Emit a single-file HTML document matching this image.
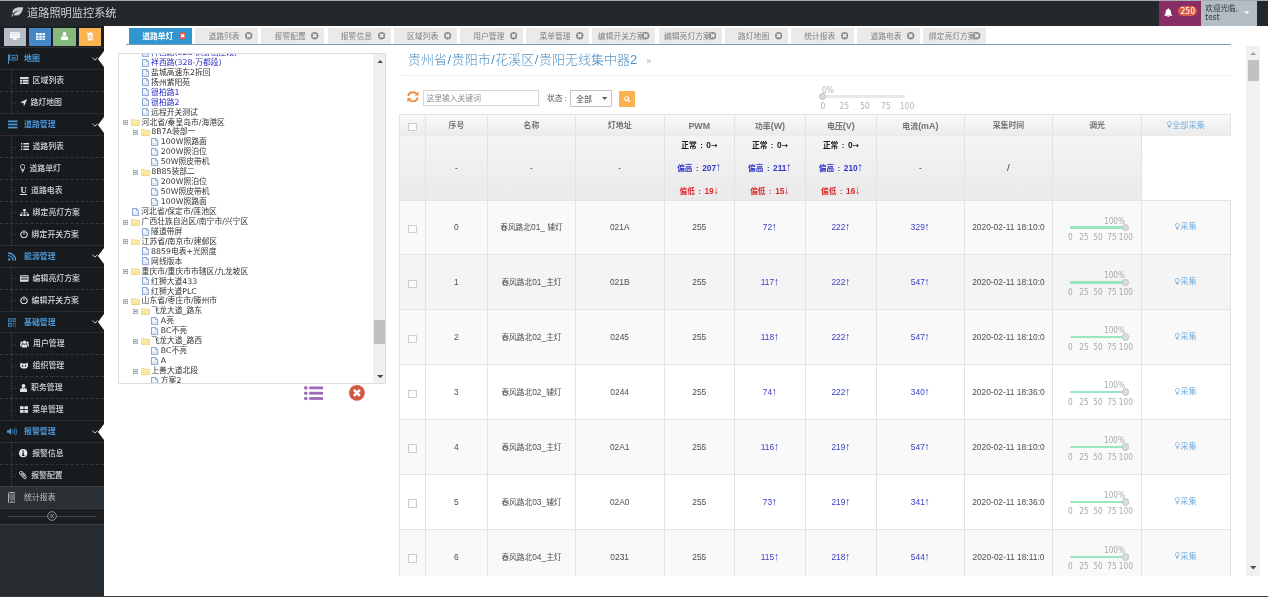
<!DOCTYPE html><html lang="zh-CN"><head><meta charset="utf-8"><title>道路照明监控系统</title><style>
*{box-sizing:border-box;margin:0;padding:0}
html,body{width:1268px;height:597px;overflow:hidden;background:#fff}
body{position:relative;will-change:transform;font-family:"Liberation Sans","Noto Sans CJK SC",sans-serif;font-size:8px;color:#393939}
.abs{position:absolute}
#topline{left:0;top:0;width:1268px;height:1px;background:#a9abad}
#header{left:0;top:1px;width:1268px;height:25px;background:#22282c}
#brand{left:27px;top:3.5px;font-size:11.2px;line-height:16px;color:#cfd3d6;white-space:nowrap;letter-spacing:0}
#bell{left:1159px;top:0;width:41.5px;height:25px;background:#892e65}
#user{left:1200.5px;top:0;width:56.5px;height:25px;background:#b4bcc4}
#user .t{left:4.8px;top:4.4px;font-size:7.6px;line-height:8px;color:#2d3338;white-space:nowrap}
#user .t span{font-family:"DejaVu Sans Condensed","Liberation Sans",sans-serif;font-size:8.3px}
#badge{left:19.2px;top:4.8px;width:19.2px;height:10.2px;border-radius:5px;background:#dd5a43;color:#fff;font-size:8.4px;line-height:10.4px;text-align:center;font-family:"DejaVu Sans Condensed","Liberation Sans",sans-serif}
#sidebar{left:0;top:26px;width:104px;height:570px;background:#252b2e}
#shortcuts{left:0;top:0;width:104px;height:22px;background:#1c2024;border-bottom:1px solid #2b3035}
.sc{top:1.7px;height:18.4px;width:22.3px}
.row{left:0;width:104px;height:21.93px;background:#181b1e;border-top:1px solid #2a2e32}
.row .t{position:absolute;top:0;line-height:22.4px;font-size:7.9px;white-space:nowrap;font-weight:500}
.row.p .t{left:24px;color:#4b97d8;font-weight:700}
.row.s .t{color:#d3d7db}
.row.s{border-top:1px dashed #35393d}
.row.s.first{border-top:1px solid #2a2e32}
.row.s:before{content:"";position:absolute;left:10.5px;top:-1px;bottom:0;border-left:1px dotted #3e4246}
.row.s:after{content:"";position:absolute;left:12px;top:10.5px;width:3px;border-top:1px dotted #3e4246}
.row svg{position:absolute}
.tri{position:absolute;right:0;top:2.5px;width:0;height:0;border-top:8px solid transparent;border-bottom:8px solid transparent;border-right:6.5px solid #fff}
#tabline{left:126px;top:44px;width:1104.5px;height:1.2px;background:#7c9cb4}
.tab{top:28.4px;height:15.8px;width:63px;background:#eceae8;color:#828282;font-size:7.8px;line-height:18.2px;white-space:nowrap;overflow:hidden}
.tab .l{position:absolute;left:0;width:57.6px;text-align:center;top:0}
.tab.on{background:#2f96cf;color:#fff;font-weight:700}
.tab .x{position:absolute;left:50px;top:4.1px;width:7.4px;height:7.4px}
#tree{left:118.3px;top:53.4px;width:268px;height:330.8px;border:1px solid #dcdcdc;background:#fff;overflow:hidden}
.ti{position:absolute;height:10px;line-height:10px;font-size:7.8px;white-space:nowrap;color:#333;font-family:"DejaVu Sans","Liberation Sans","Noto Sans CJK SC",sans-serif}
.ti.b{color:#2a2ec4}
.tico{position:absolute}
#tsb{left:254px;top:0;width:13px;height:329px;background:#f0f0f0}
#tsb .th{position:absolute;left:1.2px;top:265.5px;width:11.5px;height:24.3px;background:#c1c1c1}
#msb{left:1246px;top:45.6px;width:14px;height:530.4px;background:#f1f1f1}
#msb .th{position:absolute;left:1.5px;top:14.2px;width:11.5px;height:20.8px;background:#c1c1c1}
#h1{left:408px;top:50.5px;font-size:13px;line-height:18px;color:#4f8fc4;white-space:nowrap;font-weight:300}
#h1 i{font-style:normal;margin:0 .5px}
#h1 small{font-size:9px;color:#8aa6c0;margin-left:9px}
#dot{left:400px;top:75px;width:832px;border-top:1px dotted #e6eaef}
#kw{left:423px;top:90px;width:116px;height:15.8px;border:1px solid #d6d6d6;background:#fff;font-size:7.8px;line-height:15px;color:#8c8c8c;padding-left:2.4px;white-space:nowrap}
#stl{left:547px;top:92.5px;font-size:7.8px;line-height:12px;color:#555;white-space:nowrap}
#sel{left:570.4px;top:90.3px;width:41.5px;height:16.3px;border:1px solid #c4c4c4;border-radius:1px;background:#fdfdfd;font-size:8px;line-height:17px;padding-left:4.5px;color:#484848}
#sbtn{left:619px;top:90.6px;width:15.8px;height:16.3px;background:#fcb150}
table{border-collapse:collapse}
#tbl{left:399.4px;top:113.5px;width:831.3px}
.c{position:absolute;text-align:center;white-space:nowrap;font-size:8.4px;line-height:10px;color:#4e4e4e;font-family:"Liberation Sans","Noto Sans CJK SC",sans-serif}
.dg{font-size:8.3px}
.c b{word-spacing:1.4px}
.ar{font-family:"DejaVu Sans",sans-serif;font-size:7.6px}
.au{font-family:"Liberation Sans",sans-serif;font-size:11.5px;line-height:0;margin-left:-.4px}
.ad{font-family:"Liberation Sans",sans-serif;font-size:11px;line-height:0;margin-left:-.5px}
.hd{color:#747474;font-size:7.9px;font-weight:700}
.vl{position:absolute;width:1px;background:#e2e2e2}
.hl{position:absolute;height:1px;background:#e4e4e4}
.cb{position:absolute;width:8.6px;height:8.6px;border:1px solid #cdcdcd;background:#fcfcfc}
.bl{color:#3a3fc0}
.sl .tr{position:absolute;height:2.4px;background:#9ae6c1;border-radius:1px}
.sl .hn{position:absolute;width:7.6px;height:7.6px;border-radius:50%;background:#dcdcdc;border:1px solid #c2c2c2}
.sl .lb{position:absolute;font-size:8.2px;line-height:10px;color:#a9a9a9;white-space:nowrap;transform:translateX(-50%);font-family:"DejaVu Sans Condensed","Liberation Sans",sans-serif}
.lk{color:#78afde;font-size:8.2px}
</style></head><body>
<div id="topline" class="abs"></div>
<div id="header" class="abs">
<svg class="abs" style="left:11.4px;top:6px" width="12.6" height="10" viewBox="0 0 12.6 10"><path d="M12.3 0.6C9.4 -0.1 4.6 0.2 2.6 2.4C1.2 3.9 1.3 5.6 1.9 6.8C3.8 4.6 6 3.5 8.8 3C6.2 4 4 5.6 2.2 7.9C1.7 8.6 1.3 9.2 0.8 9.8L0.1 9.3C0.6 8.5 1.1 7.8 1.6 7.2C3.2 8.9 6.6 9 8.8 7.4C11.3 5.6 11.4 2.6 12.3 0.6Z" fill="#c9cdd0"/></svg>
<div id="brand" class="abs">道路照明监控系统</div>
<div id="bell" class="abs"><svg class="abs" style="left:5.4px;top:6.6px" width="8.6" height="9.6" viewBox="0 0 9 10"><path d="M4.5 0.3C4.9 0.3 5.1 0.6 5.1 0.9C6.6 1.3 7.3 2.6 7.3 4.2C7.3 5.9 7.8 6.9 8.7 7.6V8.1H0.3V7.6C1.2 6.9 1.7 5.9 1.7 4.2C1.7 2.6 2.4 1.3 3.9 0.9C3.9 0.6 4.1 0.3 4.5 0.3ZM3.4 8.6H5.6C5.6 9.3 5.1 9.7 4.5 9.7C3.9 9.7 3.4 9.3 3.4 8.6Z" fill="#fff"/></svg><div id="badge" class="abs">250</div></div>
<div id="user" class="abs"><div class="t abs">欢迎光临,<br><span>test</span></div><svg class="abs" style="left:43.6px;top:10.4px" width="5.6" height="3.2" viewBox="0 0 7 4"><path d="M0.3 0.2H6.7L3.5 3.8Z" fill="#fff"/></svg></div>
</div>
<div id="sidebar" class="abs">
<div id="shortcuts" class="abs">
<div class="sc abs" style="left:4px;background:#b5bec7">
<svg class="abs" style="left:6.2px;top:4.8px" width="10" height="8" viewBox="0 0 10 8"><path d="M0.6 0.2H9.4C9.7 0.2 10 0.5 10 0.8V5.4C10 5.7 9.7 6 9.4 6H6.3L6.6 7H7.3V7.7H2.7V7H3.4L3.7 6H0.6C0.3 6 0 5.7 0 5.4V0.8C0 0.5 0.3 0.2 0.6 0.2ZM0.9 1.1V5.1H9.1V1.1Z" fill="#fff" fill-rule="evenodd"/><rect x="0.9" y="1.1" width="8.2" height="4" fill="#fff" opacity=".75"/></svg>
</div>
<div class="sc abs" style="left:28.5px;background:#4488c8">
<svg class="abs" style="left:7px;top:5px" width="9" height="7.4" viewBox="0 0 9 7.4" fill="#fff"><rect x="0" y="0" width="2.6" height="2"/><rect x="3.2" y="0" width="2.6" height="2"/><rect x="6.4" y="0" width="2.6" height="2"/><rect x="0" y="2.7" width="2.6" height="2"/><rect x="3.2" y="2.7" width="2.6" height="2"/><rect x="6.4" y="2.7" width="2.6" height="2"/><rect x="0" y="5.4" width="2.6" height="2"/><rect x="3.2" y="5.4" width="2.6" height="2"/><rect x="6.4" y="5.4" width="2.6" height="2"/></svg>
</div>
<div class="sc abs" style="left:53.3px;background:#87b87c">
<svg class="abs" style="left:7.8px;top:4.6px" width="7" height="8" viewBox="0 0 7 8" fill="#fff"><circle cx="3.5" cy="2" r="1.9"/><path d="M0 8V6.2C0 4.8 1.2 4 2.2 4C2.6 4.4 3 4.6 3.5 4.6C4 4.6 4.4 4.4 4.8 4C5.8 4 7 4.8 7 6.2V8Z"/></svg>
</div>
<div class="sc abs" style="left:78.6px;background:#fdb34f">
<svg class="abs" style="left:8px;top:4.4px" width="6.4" height="8.6" viewBox="0 0 6.4 8.6"><path d="M0 0.9H2.1V0.2H4.3V0.9H6.4V1.9H5.9L5.5 8C5.5 8.3 5.2 8.6 4.9 8.6H1.5C1.2 8.6 0.9 8.3 0.9 8L0.5 1.9H0Z" fill="#fff"/><path d="M2 3V7.2M3.2 3V7.2M4.4 3V7.2" stroke="#fdb34f" stroke-width=".55"/></svg>
</div>
</div>
<div class="row p abs" style="top:21.40px"><svg style="left:8px;top:5.5px" width="10" height="10" viewBox="0 0 10 10"><path d="M0.6 0.3V9.7" stroke="#4b97d8" stroke-width="1.1"/><path d="M1.6 1.2C3 0.4 4.2 1.8 5.6 1.6C7 1.4 8 0.8 9.4 1V5.8C8 5.6 7 6.2 5.6 6.4C4.2 6.6 3 5.2 1.6 6Z" fill="none" stroke="#4b97d8" stroke-width=".9"/><path d="M3.4 2.3L5.4 3.4L7.6 2.6V4.6L5.4 5.2L3.4 4.2Z" fill="#4b97d8" opacity=".8"/></svg><div class="t">地图</div><svg style="left:91.6px;top:8.6px" width="6" height="4" viewBox="0 0 6 4"><path d="M0.4 0.5L3 3.2L5.6 0.5" fill="none" stroke="#c8ccd0" stroke-width="1"/></svg><div class="tri"></div></div>
<div class="row s first abs" style="top:43.33px"><svg style="left:20.1px;top:6.6px" width="8.6" height="7.4" viewBox="0 0 8.6 7.4" fill="#dfe3e6"><rect x="0" y="0" width="8.6" height="1.9"/><rect x="0" y="2.7" width="2.4" height="1.9"/><rect x="3" y="2.7" width="5.6" height="1.9"/><rect x="0" y="5.4" width="2.4" height="1.9"/><rect x="3" y="5.4" width="5.6" height="1.9"/></svg><div class="t" style="left:32.6px">区域列表</div></div>
<div class="row s abs" style="top:65.26px"><svg style="left:20.2px;top:6.4px" width="7.4" height="7.6" viewBox="0 0 7.4 7.6"><path d="M7.3 0.1L3.9 7.5L3.5 4L0 3.5Z" fill="#dfe3e6"/></svg><div class="t" style="left:30.4px">路灯地图</div></div>
<div class="row p abs" style="top:87.19px"><svg style="left:8px;top:6px" width="9.5" height="9" viewBox="0 0 9.5 9" fill="#4b97d8"><rect x="0" y="0.5" width="9.5" height="1.7"/><rect x="0" y="3.6" width="9.5" height="1.7"/><rect x="0" y="6.7" width="9.5" height="1.7"/></svg><div class="t">道路管理</div><svg style="left:91.6px;top:8.6px" width="6" height="4" viewBox="0 0 6 4"><path d="M0.4 0.5L3 3.2L5.6 0.5" fill="none" stroke="#c8ccd0" stroke-width="1"/></svg><div class="tri"></div></div>
<div class="row s first abs" style="top:109.12px"><svg style="left:20.6px;top:6.8px" width="8.4" height="7.2" viewBox="0 0 8.4 7.2" fill="#dfe3e6"><rect x="0" y="0" width="1.3" height="1.5"/><rect x="2.4" y="0" width="6" height="1.5"/><rect x="0" y="2.8" width="1.3" height="1.5"/><rect x="2.4" y="2.8" width="6" height="1.5"/><rect x="0" y="5.6" width="1.3" height="1.5"/><rect x="2.4" y="5.6" width="6" height="1.5"/></svg><div class="t" style="left:32.4px">道路列表</div></div>
<div class="row s abs" style="top:131.05px"><svg style="left:19.7px;top:6px" width="5.4" height="8.6" viewBox="0 0 5.4 8.6"><path d="M2.7 0.5C4 0.5 4.9 1.4 4.9 2.6C4.9 3.8 3.9 4.3 3.8 5.6H1.6C1.5 4.3 0.5 3.8 0.5 2.6C0.5 1.4 1.4 0.5 2.7 0.5Z" fill="none" stroke="#dfe3e6" stroke-width=".9"/><rect x="1.5" y="6.1" width="2.4" height="0.9" fill="#dfe3e6"/><rect x="1.9" y="7.4" width="1.6" height="0.9" fill="#dfe3e6"/></svg><div class="t" style="left:29.4px">道路单灯</div></div>
<div class="row s abs" style="top:152.98px"><div style="position:absolute;left:19.9px;top:4.6px;width:7.4px;text-align:center;font:700 8.8px/11px 'Liberation Serif',serif;color:#dfe3e6;border-bottom:1px solid #dfe3e6;height:10.4px">U</div><div class="t" style="left:31px">道路电表</div></div>
<div class="row s abs" style="top:174.91px"><svg style="left:19.9px;top:6.6px" width="9" height="7.6" viewBox="0 0 9 7.6" fill="#dfe3e6"><rect x="3.2" y="0" width="2.6" height="2.2"/><rect x="0" y="5.2" width="2.4" height="2.2"/><rect x="3.3" y="5.2" width="2.4" height="2.2"/><rect x="6.6" y="5.2" width="2.4" height="2.2"/><path d="M4.5 2V5.4M1.2 5.4V3.8H7.8V5.4" fill="none" stroke="#dfe3e6" stroke-width=".6"/></svg><div class="t" style="left:32.6px">绑定亮灯方案</div></div>
<div class="row s abs" style="top:196.84px"><svg style="left:19.7px;top:6.2px" width="8" height="8.4" viewBox="0 0 8 8.4"><path d="M2.4 1.8C-0.4 3.6 0.6 7.7 4 7.7C7.4 7.7 8.4 3.6 5.6 1.8" fill="none" stroke="#dfe3e6" stroke-width="1.1" stroke-linecap="round"/><path d="M4 0.4V4" stroke="#dfe3e6" stroke-width="1.1" stroke-linecap="round"/></svg><div class="t" style="left:31.6px">绑定开关方案</div></div>
<div class="row p abs" style="top:218.77px"><svg style="left:7.8px;top:6px" width="8.4" height="9" viewBox="0 0 9 9"><circle cx="1.3" cy="7.7" r="1.3" fill="#4b97d8"/><path d="M0 3.6C3 3.6 5.4 6 5.4 9" fill="none" stroke="#4b97d8" stroke-width="1.5"/><path d="M0 0.8C4.6 0.8 8.2 4.4 8.2 9" fill="none" stroke="#4b97d8" stroke-width="1.5"/></svg><div class="t">能源管理</div><svg style="left:91.6px;top:8.6px" width="6" height="4" viewBox="0 0 6 4"><path d="M0.4 0.5L3 3.2L5.6 0.5" fill="none" stroke="#c8ccd0" stroke-width="1"/></svg><div class="tri"></div></div>
<div class="row s first abs" style="top:240.70px"><svg style="left:20.0px;top:7px" width="8.6" height="7" viewBox="0 0 9 7"><rect x="0" y="0" width="9" height="7" rx=".8" fill="#dfe3e6"/><rect x="0.8" y="1.2" width="7.4" height="0.9" fill="#181b1e"/><rect x="0.8" y="3" width="7.4" height="2" fill="#181b1e" opacity=".55"/></svg><div class="t" style="left:32.6px">编辑亮灯方案</div></div>
<div class="row s abs" style="top:262.63px"><svg style="left:19.7px;top:6.2px" width="8" height="8.4" viewBox="0 0 8 8.4"><path d="M2.4 1.8C-0.4 3.6 0.6 7.7 4 7.7C7.4 7.7 8.4 3.6 5.6 1.8" fill="none" stroke="#dfe3e6" stroke-width="1.1" stroke-linecap="round"/><path d="M4 0.4V4" stroke="#dfe3e6" stroke-width="1.1" stroke-linecap="round"/></svg><div class="t" style="left:31.6px">编辑开关方案</div></div>
<div class="row p abs" style="top:284.56px"><svg style="left:7.8px;top:6.2px" width="8.4" height="9" viewBox="0 0 9 9" fill="none" stroke="#4b97d8" stroke-width=".9"><rect x="0.5" y="0.5" width="3" height="3"/><rect x="5.5" y="0.5" width="3" height="3"/><rect x="0.5" y="5.5" width="3" height="3"/><path d="M5.2 5.6H7M8.5 5.2V7M5.5 7V8.6M7 8.4H8.8"/></svg><div class="t">基础管理</div><svg style="left:91.6px;top:8.6px" width="6" height="4" viewBox="0 0 6 4"><path d="M0.4 0.5L3 3.2L5.6 0.5" fill="none" stroke="#c8ccd0" stroke-width="1"/></svg><div class="tri"></div></div>
<div class="row s first abs" style="top:306.49px"><svg style="left:19.8px;top:6.4px" width="9" height="8" viewBox="0 0 10 8" fill="#dfe3e6"><circle cx="5" cy="2.1" r="1.9"/><path d="M2 8V6.3C2 5 3 4.3 3.8 4.2C4.2 4.6 4.6 4.7 5 4.7C5.4 4.7 5.8 4.6 6.2 4.2C7 4.3 8 5 8 6.3V8Z"/><circle cx="1.7" cy="2.6" r="1.3"/><circle cx="8.3" cy="2.6" r="1.3"/><path d="M0 6.6V5.4C0 4.6 0.7 4.1 1.4 4.1C1.8 4.4 2.2 4.4 2.6 4.3C2 4.8 1.6 5.5 1.6 6.6Z"/><path d="M10 6.6V5.4C10 4.6 9.3 4.1 8.6 4.1C8.2 4.4 7.8 4.4 7.4 4.3C8 4.8 8.4 5.5 8.4 6.6Z"/></svg><div class="t" style="left:33px">用户管理</div></div>
<div class="row s abs" style="top:328.42px"><svg style="left:19.9px;top:7px" width="8.2" height="7" viewBox="0 0 9 7"><path d="M0.6 0.2L2.2 1.2H6.8L8.4 0.2L8.6 2.2C9 3 9 3.8 8.6 4.8C8 6.2 6.4 6.8 4.5 6.8C2.6 6.8 1 6.2 0.4 4.8C0 3.8 0 3 0.4 2.2Z" fill="#dfe3e6"/><ellipse cx="2.9" cy="4" rx=".8" ry="1" fill="#181b1e"/><ellipse cx="6.1" cy="4" rx=".8" ry="1" fill="#181b1e"/></svg><div class="t" style="left:32.6px">组织管理</div></div>
<div class="row s abs" style="top:350.35px"><svg style="left:19.7px;top:6.4px" width="7" height="8" viewBox="0 0 7 8" fill="#dfe3e6"><circle cx="3.5" cy="2" r="1.9"/><path d="M0 8V6.2C0 4.8 1.2 4 2.2 4C2.6 4.4 3 4.6 3.5 4.6C4 4.6 4.4 4.4 4.8 4C5.8 4 7 4.8 7 6.2V8Z"/></svg><div class="t" style="left:31px">职务管理</div></div>
<div class="row s abs" style="top:372.28px"><svg style="left:20.0px;top:6.8px" width="8" height="7.2" viewBox="0 0 8.6 7.2" fill="#dfe3e6"><rect x="0" y="0" width="3.9" height="3.1"/><rect x="4.7" y="0" width="3.9" height="3.1"/><rect x="0" y="4" width="3.9" height="3.1"/><rect x="4.7" y="4" width="3.9" height="3.1"/></svg><div class="t" style="left:32.2px">菜单管理</div></div>
<div class="row p abs" style="top:394.21px"><svg style="left:7px;top:6.2px" width="10" height="9" viewBox="0 0 11 9"><path d="M0 3H2L4.6 0.6V8.4L2 6H0Z" fill="#4b97d8"/><path d="M5.8 2.8C6.8 3.6 6.8 5.4 5.8 6.2M7.2 1.4C9 2.8 9 6.2 7.2 7.6M8.8 0.4C11.2 2.4 11.2 6.6 8.8 8.6" fill="none" stroke="#4b97d8" stroke-width=".9"/></svg><div class="t">报警管理</div><svg style="left:91.6px;top:8.6px" width="6" height="4" viewBox="0 0 6 4"><path d="M0.4 0.5L3 3.2L5.6 0.5" fill="none" stroke="#c8ccd0" stroke-width="1"/></svg><div class="tri"></div></div>
<div class="row s first abs" style="top:416.14px"><svg style="left:19.2px;top:6.2px" width="8.4" height="8.4" viewBox="0 0 8.4 8.4"><circle cx="4.2" cy="4.2" r="4.1" fill="#dfe3e6"/><rect x="3.6" y="1.5" width="1.3" height="1.3" fill="#181b1e"/><path d="M3.2 3.5H4.9V6.1H5.5V6.9H3V6.1H3.6V4.3H3.2Z" fill="#181b1e"/></svg><div class="t" style="left:32.2px">报警信息</div></div>
<div class="row s abs" style="top:438.07px"><svg style="left:19.2px;top:6.4px" width="8" height="8.4" viewBox="0 0 8 8.4"><path d="M6.8 4.2L3.4 0.9C2.6 0.1 1.4 0.3 0.9 0.9C0.3 1.6 0.3 2.6 1 3.3L5.2 7.4C5.7 7.9 6.5 7.9 6.9 7.4C7.4 6.9 7.3 6.2 6.9 5.8L3.2 2.2C3 2 2.6 2 2.4 2.2C2.2 2.4 2.2 2.8 2.4 3L5.4 6" fill="none" stroke="#dfe3e6" stroke-width=".95" stroke-linecap="round"/></svg><div class="t" style="left:31.2px">报警配置</div></div>
<div class="row abs" style="top:460.00px;background:#2a3033;border-top:1px solid #363c3f"><svg style="left:8px;top:4.6px" width="7.4" height="11.4" viewBox="0 0 7.4 11.4"><rect x="0.5" y="0.5" width="6.4" height="10.4" rx="1" fill="none" stroke="#aeb6bd" stroke-width="1"/><rect x="1.4" y="1.6" width="4.6" height="6.8" fill="#aeb6bd" opacity=".45"/><rect x="2.7" y="9.2" width="2" height="0.9" fill="#aeb6bd"/></svg><div class="t" style="left:24px;color:#b9c0c6;font-weight:400">统计报表</div></div>
<div class="abs" style="left:0;top:481.93px;width:104px;height:16.6px;background:#1b1f21;border-top:1px solid #33393c;border-bottom:1px solid #3a4043"><div class="abs" style="left:8px;top:6.6px;width:88px;height:1px;background:#3d4346"></div><svg class="abs" style="left:47.2px;top:2.2px" width="10" height="10" viewBox="0 0 10 10"><circle cx="5" cy="5" r="4.3" fill="#1b1f21" stroke="#9aa1a8" stroke-width=".9"/><path d="M5 3L3.2 5L5 7M7 3L5.2 5L7 7" fill="none" stroke="#9aa1a8" stroke-width=".9"/></svg></div>
</div>
<div class="tab on abs" style="left:129.0px"><div class="l">道路单灯</div><svg class="x" viewBox="0 0 8 8"><circle cx="4" cy="4" r="4" fill="#d9534a"/><path d="M2.2 2.2L5.8 5.8M5.8 2.2L2.2 5.8" stroke="#fff" stroke-width="1.5"/></svg></div>
<div class="tab abs" style="left:195.2px"><div class="l">道路列表</div><svg class="x" viewBox="0 0 8 8"><circle cx="4" cy="4" r="4" fill="#8b8b8b"/><path d="M2.2 2.2L5.8 5.8M5.8 2.2L2.2 5.8" stroke="#f4f4f4" stroke-width="1.5"/></svg></div>
<div class="tab abs" style="left:261.4px"><div class="l">报警配置</div><svg class="x" viewBox="0 0 8 8"><circle cx="4" cy="4" r="4" fill="#8b8b8b"/><path d="M2.2 2.2L5.8 5.8M5.8 2.2L2.2 5.8" stroke="#f4f4f4" stroke-width="1.5"/></svg></div>
<div class="tab abs" style="left:327.6px"><div class="l">报警信息</div><svg class="x" viewBox="0 0 8 8"><circle cx="4" cy="4" r="4" fill="#8b8b8b"/><path d="M2.2 2.2L5.8 5.8M5.8 2.2L2.2 5.8" stroke="#f4f4f4" stroke-width="1.5"/></svg></div>
<div class="tab abs" style="left:393.8px"><div class="l">区域列表</div><svg class="x" viewBox="0 0 8 8"><circle cx="4" cy="4" r="4" fill="#8b8b8b"/><path d="M2.2 2.2L5.8 5.8M5.8 2.2L2.2 5.8" stroke="#f4f4f4" stroke-width="1.5"/></svg></div>
<div class="tab abs" style="left:460.0px"><div class="l">用户管理</div><svg class="x" viewBox="0 0 8 8"><circle cx="4" cy="4" r="4" fill="#8b8b8b"/><path d="M2.2 2.2L5.8 5.8M5.8 2.2L2.2 5.8" stroke="#f4f4f4" stroke-width="1.5"/></svg></div>
<div class="tab abs" style="left:526.2px"><div class="l">菜单管理</div><svg class="x" viewBox="0 0 8 8"><circle cx="4" cy="4" r="4" fill="#8b8b8b"/><path d="M2.2 2.2L5.8 5.8M5.8 2.2L2.2 5.8" stroke="#f4f4f4" stroke-width="1.5"/></svg></div>
<div class="tab abs" style="left:592.4px"><div class="l">编辑开关方案</div><svg class="x" viewBox="0 0 8 8"><circle cx="4" cy="4" r="4" fill="#8b8b8b"/><path d="M2.2 2.2L5.8 5.8M5.8 2.2L2.2 5.8" stroke="#f4f4f4" stroke-width="1.5"/></svg></div>
<div class="tab abs" style="left:658.6px"><div class="l">编辑亮灯方案</div><svg class="x" viewBox="0 0 8 8"><circle cx="4" cy="4" r="4" fill="#8b8b8b"/><path d="M2.2 2.2L5.8 5.8M5.8 2.2L2.2 5.8" stroke="#f4f4f4" stroke-width="1.5"/></svg></div>
<div class="tab abs" style="left:724.8px"><div class="l">路灯地图</div><svg class="x" viewBox="0 0 8 8"><circle cx="4" cy="4" r="4" fill="#8b8b8b"/><path d="M2.2 2.2L5.8 5.8M5.8 2.2L2.2 5.8" stroke="#f4f4f4" stroke-width="1.5"/></svg></div>
<div class="tab abs" style="left:791.0px"><div class="l">统计报表</div><svg class="x" viewBox="0 0 8 8"><circle cx="4" cy="4" r="4" fill="#8b8b8b"/><path d="M2.2 2.2L5.8 5.8M5.8 2.2L2.2 5.8" stroke="#f4f4f4" stroke-width="1.5"/></svg></div>
<div class="tab abs" style="left:857.2px"><div class="l">道路电表</div><svg class="x" viewBox="0 0 8 8"><circle cx="4" cy="4" r="4" fill="#8b8b8b"/><path d="M2.2 2.2L5.8 5.8M5.8 2.2L2.2 5.8" stroke="#f4f4f4" stroke-width="1.5"/></svg></div>
<div class="tab abs" style="left:923.4px"><div class="l">绑定亮灯方案</div><svg class="x" viewBox="0 0 8 8"><circle cx="4" cy="4" r="4" fill="#8b8b8b"/><path d="M2.2 2.2L5.8 5.8M5.8 2.2L2.2 5.8" stroke="#f4f4f4" stroke-width="1.5"/></svg></div>
<div id="tabline" class="abs"></div>
<div id="tree" class="abs">
<svg class="tico" style="left:22.5px;top:-5.7px" width="7.2" height="8.2" viewBox="0 0 7.2 8.2"><path d="M0.5 0.5H4.7L6.7 2.5V7.7H0.5Z" fill="#dbe6f7" stroke="#7f99d0" stroke-width=".9"/><path d="M1.2 1.2H4.2V3.1H6V4.6H1.2Z" fill="#f7faff"/><path d="M4.5 0.6V2.7H6.6" fill="none" stroke="#7f99d0" stroke-width=".7"/></svg>
<div class="ti b" style="left:31.8px;top:-6.4px">祥西路(328-沃野山庄段)</div>
<svg class="tico" style="left:22.5px;top:4.2px" width="7.2" height="8.2" viewBox="0 0 7.2 8.2"><path d="M0.5 0.5H4.7L6.7 2.5V7.7H0.5Z" fill="#dbe6f7" stroke="#7f99d0" stroke-width=".9"/><path d="M1.2 1.2H4.2V3.1H6V4.6H1.2Z" fill="#f7faff"/><path d="M4.5 0.6V2.7H6.6" fill="none" stroke="#7f99d0" stroke-width=".7"/></svg>
<div class="ti b" style="left:31.8px;top:3.5px">祥西路(328-万都段)</div>
<svg class="tico" style="left:22.5px;top:14.2px" width="7.2" height="8.2" viewBox="0 0 7.2 8.2"><path d="M0.5 0.5H4.7L6.7 2.5V7.7H0.5Z" fill="#dbe6f7" stroke="#7f99d0" stroke-width=".9"/><path d="M1.2 1.2H4.2V3.1H6V4.6H1.2Z" fill="#f7faff"/><path d="M4.5 0.6V2.7H6.6" fill="none" stroke="#7f99d0" stroke-width=".7"/></svg>
<div class="ti" style="left:31.8px;top:13.5px">盐城高速东2拆回</div>
<svg class="tico" style="left:22.5px;top:24.1px" width="7.2" height="8.2" viewBox="0 0 7.2 8.2"><path d="M0.5 0.5H4.7L6.7 2.5V7.7H0.5Z" fill="#dbe6f7" stroke="#7f99d0" stroke-width=".9"/><path d="M1.2 1.2H4.2V3.1H6V4.6H1.2Z" fill="#f7faff"/><path d="M4.5 0.6V2.7H6.6" fill="none" stroke="#7f99d0" stroke-width=".7"/></svg>
<div class="ti" style="left:31.8px;top:23.4px">扬州紫阳苑</div>
<svg class="tico" style="left:22.5px;top:34.1px" width="7.2" height="8.2" viewBox="0 0 7.2 8.2"><path d="M0.5 0.5H4.7L6.7 2.5V7.7H0.5Z" fill="#dbe6f7" stroke="#7f99d0" stroke-width=".9"/><path d="M1.2 1.2H4.2V3.1H6V4.6H1.2Z" fill="#f7faff"/><path d="M4.5 0.6V2.7H6.6" fill="none" stroke="#7f99d0" stroke-width=".7"/></svg>
<div class="ti b" style="left:31.8px;top:33.4px">银柏路1</div>
<svg class="tico" style="left:22.5px;top:44.0px" width="7.2" height="8.2" viewBox="0 0 7.2 8.2"><path d="M0.5 0.5H4.7L6.7 2.5V7.7H0.5Z" fill="#dbe6f7" stroke="#7f99d0" stroke-width=".9"/><path d="M1.2 1.2H4.2V3.1H6V4.6H1.2Z" fill="#f7faff"/><path d="M4.5 0.6V2.7H6.6" fill="none" stroke="#7f99d0" stroke-width=".7"/></svg>
<div class="ti b" style="left:31.8px;top:43.3px">银柏路2</div>
<svg class="tico" style="left:22.5px;top:53.9px" width="7.2" height="8.2" viewBox="0 0 7.2 8.2"><path d="M0.5 0.5H4.7L6.7 2.5V7.7H0.5Z" fill="#dbe6f7" stroke="#7f99d0" stroke-width=".9"/><path d="M1.2 1.2H4.2V3.1H6V4.6H1.2Z" fill="#f7faff"/><path d="M4.5 0.6V2.7H6.6" fill="none" stroke="#7f99d0" stroke-width=".7"/></svg>
<div class="ti" style="left:31.8px;top:53.2px">远程开关测试</div>
<svg class="tico" style="left:3.5px;top:65.8px" width="5" height="5" viewBox="0 0 5 5"><rect x="0.4" y="0.4" width="4.2" height="4.2" fill="#e9ecee" stroke="#a3a9ad" stroke-width=".8"/><path d="M1.3 2.5H3.7" stroke="#5f6468" stroke-width=".8"/></svg>
<svg class="tico" style="left:12.1px;top:65.0px" width="9" height="6.8" viewBox="0 0 9 6.8"><path d="M0.3 1.1C0.3 0.7 0.6 0.4 1 0.4H3.2L4 1.3H8C8.4 1.3 8.7 1.6 8.7 2V5.8C8.7 6.2 8.4 6.5 8 6.5H1C0.6 6.5 0.3 6.2 0.3 5.8Z" fill="#f9e89c" stroke="#e4c660" stroke-width=".6"/><path d="M0.6 2.3H8.4" stroke="#fdf3c2" stroke-width=".8"/></svg>
<div class="ti" style="left:22.3px;top:63.2px">河北省/秦皇岛市/海港区</div>
<svg class="tico" style="left:13.3px;top:75.7px" width="5" height="5" viewBox="0 0 5 5"><rect x="0.4" y="0.4" width="4.2" height="4.2" fill="#e9ecee" stroke="#a3a9ad" stroke-width=".8"/><path d="M1.3 2.5H3.7" stroke="#5f6468" stroke-width=".8"/></svg>
<svg class="tico" style="left:21.9px;top:74.9px" width="9" height="6.8" viewBox="0 0 9 6.8"><path d="M0.3 1.1C0.3 0.7 0.6 0.4 1 0.4H3.2L4 1.3H8C8.4 1.3 8.7 1.6 8.7 2V5.8C8.7 6.2 8.4 6.5 8 6.5H1C0.6 6.5 0.3 6.2 0.3 5.8Z" fill="#f9e89c" stroke="#e4c660" stroke-width=".6"/><path d="M0.6 2.3H8.4" stroke="#fdf3c2" stroke-width=".8"/></svg>
<div class="ti" style="left:32.0px;top:73.1px">8B7A装部一</div>
<svg class="tico" style="left:32.2px;top:83.8px" width="7.2" height="8.2" viewBox="0 0 7.2 8.2"><path d="M0.5 0.5H4.7L6.7 2.5V7.7H0.5Z" fill="#dbe6f7" stroke="#7f99d0" stroke-width=".9"/><path d="M1.2 1.2H4.2V3.1H6V4.6H1.2Z" fill="#f7faff"/><path d="M4.5 0.6V2.7H6.6" fill="none" stroke="#7f99d0" stroke-width=".7"/></svg>
<div class="ti" style="left:41.5px;top:83.1px">100W照路面</div>
<svg class="tico" style="left:32.2px;top:93.7px" width="7.2" height="8.2" viewBox="0 0 7.2 8.2"><path d="M0.5 0.5H4.7L6.7 2.5V7.7H0.5Z" fill="#dbe6f7" stroke="#7f99d0" stroke-width=".9"/><path d="M1.2 1.2H4.2V3.1H6V4.6H1.2Z" fill="#f7faff"/><path d="M4.5 0.6V2.7H6.6" fill="none" stroke="#7f99d0" stroke-width=".7"/></svg>
<div class="ti" style="left:41.5px;top:93.0px">200W照泊位</div>
<svg class="tico" style="left:32.2px;top:103.6px" width="7.2" height="8.2" viewBox="0 0 7.2 8.2"><path d="M0.5 0.5H4.7L6.7 2.5V7.7H0.5Z" fill="#dbe6f7" stroke="#7f99d0" stroke-width=".9"/><path d="M1.2 1.2H4.2V3.1H6V4.6H1.2Z" fill="#f7faff"/><path d="M4.5 0.6V2.7H6.6" fill="none" stroke="#7f99d0" stroke-width=".7"/></svg>
<div class="ti" style="left:41.5px;top:102.9px">50W照皮带机</div>
<svg class="tico" style="left:13.3px;top:115.5px" width="5" height="5" viewBox="0 0 5 5"><rect x="0.4" y="0.4" width="4.2" height="4.2" fill="#e9ecee" stroke="#a3a9ad" stroke-width=".8"/><path d="M1.3 2.5H3.7" stroke="#5f6468" stroke-width=".8"/></svg>
<svg class="tico" style="left:21.9px;top:114.7px" width="9" height="6.8" viewBox="0 0 9 6.8"><path d="M0.3 1.1C0.3 0.7 0.6 0.4 1 0.4H3.2L4 1.3H8C8.4 1.3 8.7 1.6 8.7 2V5.8C8.7 6.2 8.4 6.5 8 6.5H1C0.6 6.5 0.3 6.2 0.3 5.8Z" fill="#f9e89c" stroke="#e4c660" stroke-width=".6"/><path d="M0.6 2.3H8.4" stroke="#fdf3c2" stroke-width=".8"/></svg>
<div class="ti" style="left:32.0px;top:112.9px">8B85装部二</div>
<svg class="tico" style="left:32.2px;top:123.5px" width="7.2" height="8.2" viewBox="0 0 7.2 8.2"><path d="M0.5 0.5H4.7L6.7 2.5V7.7H0.5Z" fill="#dbe6f7" stroke="#7f99d0" stroke-width=".9"/><path d="M1.2 1.2H4.2V3.1H6V4.6H1.2Z" fill="#f7faff"/><path d="M4.5 0.6V2.7H6.6" fill="none" stroke="#7f99d0" stroke-width=".7"/></svg>
<div class="ti" style="left:41.5px;top:122.8px">200W照泊位</div>
<svg class="tico" style="left:32.2px;top:133.5px" width="7.2" height="8.2" viewBox="0 0 7.2 8.2"><path d="M0.5 0.5H4.7L6.7 2.5V7.7H0.5Z" fill="#dbe6f7" stroke="#7f99d0" stroke-width=".9"/><path d="M1.2 1.2H4.2V3.1H6V4.6H1.2Z" fill="#f7faff"/><path d="M4.5 0.6V2.7H6.6" fill="none" stroke="#7f99d0" stroke-width=".7"/></svg>
<div class="ti" style="left:41.5px;top:132.8px">50W照皮带机</div>
<svg class="tico" style="left:32.2px;top:143.4px" width="7.2" height="8.2" viewBox="0 0 7.2 8.2"><path d="M0.5 0.5H4.7L6.7 2.5V7.7H0.5Z" fill="#dbe6f7" stroke="#7f99d0" stroke-width=".9"/><path d="M1.2 1.2H4.2V3.1H6V4.6H1.2Z" fill="#f7faff"/><path d="M4.5 0.6V2.7H6.6" fill="none" stroke="#7f99d0" stroke-width=".7"/></svg>
<div class="ti" style="left:41.5px;top:142.7px">100W照路面</div>
<svg class="tico" style="left:12.7px;top:153.3px" width="7.2" height="8.2" viewBox="0 0 7.2 8.2"><path d="M0.5 0.5H4.7L6.7 2.5V7.7H0.5Z" fill="#dbe6f7" stroke="#7f99d0" stroke-width=".9"/><path d="M1.2 1.2H4.2V3.1H6V4.6H1.2Z" fill="#f7faff"/><path d="M4.5 0.6V2.7H6.6" fill="none" stroke="#7f99d0" stroke-width=".7"/></svg>
<div class="ti" style="left:22.0px;top:152.6px">河北省/保定市/莲池区</div>
<svg class="tico" style="left:3.5px;top:165.2px" width="5" height="5" viewBox="0 0 5 5"><rect x="0.4" y="0.4" width="4.2" height="4.2" fill="#e9ecee" stroke="#a3a9ad" stroke-width=".8"/><path d="M1.3 2.5H3.7" stroke="#5f6468" stroke-width=".8"/></svg>
<svg class="tico" style="left:12.1px;top:164.4px" width="9" height="6.8" viewBox="0 0 9 6.8"><path d="M0.3 1.1C0.3 0.7 0.6 0.4 1 0.4H3.2L4 1.3H8C8.4 1.3 8.7 1.6 8.7 2V5.8C8.7 6.2 8.4 6.5 8 6.5H1C0.6 6.5 0.3 6.2 0.3 5.8Z" fill="#f9e89c" stroke="#e4c660" stroke-width=".6"/><path d="M0.6 2.3H8.4" stroke="#fdf3c2" stroke-width=".8"/></svg>
<div class="ti" style="left:22.3px;top:162.6px">广西壮族自治区/南宁市/兴宁区</div>
<svg class="tico" style="left:22.5px;top:173.2px" width="7.2" height="8.2" viewBox="0 0 7.2 8.2"><path d="M0.5 0.5H4.7L6.7 2.5V7.7H0.5Z" fill="#dbe6f7" stroke="#7f99d0" stroke-width=".9"/><path d="M1.2 1.2H4.2V3.1H6V4.6H1.2Z" fill="#f7faff"/><path d="M4.5 0.6V2.7H6.6" fill="none" stroke="#7f99d0" stroke-width=".7"/></svg>
<div class="ti" style="left:31.8px;top:172.5px">隧道带屏</div>
<svg class="tico" style="left:3.5px;top:185.1px" width="5" height="5" viewBox="0 0 5 5"><rect x="0.4" y="0.4" width="4.2" height="4.2" fill="#e9ecee" stroke="#a3a9ad" stroke-width=".8"/><path d="M1.3 2.5H3.7" stroke="#5f6468" stroke-width=".8"/></svg>
<svg class="tico" style="left:12.1px;top:184.3px" width="9" height="6.8" viewBox="0 0 9 6.8"><path d="M0.3 1.1C0.3 0.7 0.6 0.4 1 0.4H3.2L4 1.3H8C8.4 1.3 8.7 1.6 8.7 2V5.8C8.7 6.2 8.4 6.5 8 6.5H1C0.6 6.5 0.3 6.2 0.3 5.8Z" fill="#f9e89c" stroke="#e4c660" stroke-width=".6"/><path d="M0.6 2.3H8.4" stroke="#fdf3c2" stroke-width=".8"/></svg>
<div class="ti" style="left:22.3px;top:182.5px">江苏省/南京市/建邺区</div>
<svg class="tico" style="left:22.5px;top:193.1px" width="7.2" height="8.2" viewBox="0 0 7.2 8.2"><path d="M0.5 0.5H4.7L6.7 2.5V7.7H0.5Z" fill="#dbe6f7" stroke="#7f99d0" stroke-width=".9"/><path d="M1.2 1.2H4.2V3.1H6V4.6H1.2Z" fill="#f7faff"/><path d="M4.5 0.6V2.7H6.6" fill="none" stroke="#7f99d0" stroke-width=".7"/></svg>
<div class="ti" style="left:31.8px;top:192.4px">8859电表+光照度</div>
<svg class="tico" style="left:22.5px;top:203.0px" width="7.2" height="8.2" viewBox="0 0 7.2 8.2"><path d="M0.5 0.5H4.7L6.7 2.5V7.7H0.5Z" fill="#dbe6f7" stroke="#7f99d0" stroke-width=".9"/><path d="M1.2 1.2H4.2V3.1H6V4.6H1.2Z" fill="#f7faff"/><path d="M4.5 0.6V2.7H6.6" fill="none" stroke="#7f99d0" stroke-width=".7"/></svg>
<div class="ti" style="left:31.8px;top:202.3px">网线版本</div>
<svg class="tico" style="left:3.5px;top:214.9px" width="5" height="5" viewBox="0 0 5 5"><rect x="0.4" y="0.4" width="4.2" height="4.2" fill="#e9ecee" stroke="#a3a9ad" stroke-width=".8"/><path d="M1.3 2.5H3.7" stroke="#5f6468" stroke-width=".8"/></svg>
<svg class="tico" style="left:12.1px;top:214.1px" width="9" height="6.8" viewBox="0 0 9 6.8"><path d="M0.3 1.1C0.3 0.7 0.6 0.4 1 0.4H3.2L4 1.3H8C8.4 1.3 8.7 1.6 8.7 2V5.8C8.7 6.2 8.4 6.5 8 6.5H1C0.6 6.5 0.3 6.2 0.3 5.8Z" fill="#f9e89c" stroke="#e4c660" stroke-width=".6"/><path d="M0.6 2.3H8.4" stroke="#fdf3c2" stroke-width=".8"/></svg>
<div class="ti" style="left:22.3px;top:212.3px">重庆市/重庆市市辖区/九龙坡区</div>
<svg class="tico" style="left:22.5px;top:222.9px" width="7.2" height="8.2" viewBox="0 0 7.2 8.2"><path d="M0.5 0.5H4.7L6.7 2.5V7.7H0.5Z" fill="#dbe6f7" stroke="#7f99d0" stroke-width=".9"/><path d="M1.2 1.2H4.2V3.1H6V4.6H1.2Z" fill="#f7faff"/><path d="M4.5 0.6V2.7H6.6" fill="none" stroke="#7f99d0" stroke-width=".7"/></svg>
<div class="ti" style="left:31.8px;top:222.2px">红狮大道433</div>
<svg class="tico" style="left:22.5px;top:232.9px" width="7.2" height="8.2" viewBox="0 0 7.2 8.2"><path d="M0.5 0.5H4.7L6.7 2.5V7.7H0.5Z" fill="#dbe6f7" stroke="#7f99d0" stroke-width=".9"/><path d="M1.2 1.2H4.2V3.1H6V4.6H1.2Z" fill="#f7faff"/><path d="M4.5 0.6V2.7H6.6" fill="none" stroke="#7f99d0" stroke-width=".7"/></svg>
<div class="ti" style="left:31.8px;top:232.2px">红狮大道PLC</div>
<svg class="tico" style="left:3.5px;top:244.7px" width="5" height="5" viewBox="0 0 5 5"><rect x="0.4" y="0.4" width="4.2" height="4.2" fill="#e9ecee" stroke="#a3a9ad" stroke-width=".8"/><path d="M1.3 2.5H3.7" stroke="#5f6468" stroke-width=".8"/></svg>
<svg class="tico" style="left:12.1px;top:243.9px" width="9" height="6.8" viewBox="0 0 9 6.8"><path d="M0.3 1.1C0.3 0.7 0.6 0.4 1 0.4H3.2L4 1.3H8C8.4 1.3 8.7 1.6 8.7 2V5.8C8.7 6.2 8.4 6.5 8 6.5H1C0.6 6.5 0.3 6.2 0.3 5.8Z" fill="#f9e89c" stroke="#e4c660" stroke-width=".6"/><path d="M0.6 2.3H8.4" stroke="#fdf3c2" stroke-width=".8"/></svg>
<div class="ti" style="left:22.3px;top:242.1px">山东省/枣庄市/滕州市</div>
<svg class="tico" style="left:13.3px;top:254.6px" width="5" height="5" viewBox="0 0 5 5"><rect x="0.4" y="0.4" width="4.2" height="4.2" fill="#e9ecee" stroke="#a3a9ad" stroke-width=".8"/><path d="M1.3 2.5H3.7" stroke="#5f6468" stroke-width=".8"/></svg>
<svg class="tico" style="left:21.9px;top:253.8px" width="9" height="6.8" viewBox="0 0 9 6.8"><path d="M0.3 1.1C0.3 0.7 0.6 0.4 1 0.4H3.2L4 1.3H8C8.4 1.3 8.7 1.6 8.7 2V5.8C8.7 6.2 8.4 6.5 8 6.5H1C0.6 6.5 0.3 6.2 0.3 5.8Z" fill="#f9e89c" stroke="#e4c660" stroke-width=".6"/><path d="M0.6 2.3H8.4" stroke="#fdf3c2" stroke-width=".8"/></svg>
<div class="ti" style="left:32.0px;top:252.0px">飞龙大道_路东</div>
<svg class="tico" style="left:32.2px;top:262.7px" width="7.2" height="8.2" viewBox="0 0 7.2 8.2"><path d="M0.5 0.5H4.7L6.7 2.5V7.7H0.5Z" fill="#dbe6f7" stroke="#7f99d0" stroke-width=".9"/><path d="M1.2 1.2H4.2V3.1H6V4.6H1.2Z" fill="#f7faff"/><path d="M4.5 0.6V2.7H6.6" fill="none" stroke="#7f99d0" stroke-width=".7"/></svg>
<div class="ti" style="left:41.5px;top:262.0px">A亮</div>
<svg class="tico" style="left:32.2px;top:272.6px" width="7.2" height="8.2" viewBox="0 0 7.2 8.2"><path d="M0.5 0.5H4.7L6.7 2.5V7.7H0.5Z" fill="#dbe6f7" stroke="#7f99d0" stroke-width=".9"/><path d="M1.2 1.2H4.2V3.1H6V4.6H1.2Z" fill="#f7faff"/><path d="M4.5 0.6V2.7H6.6" fill="none" stroke="#7f99d0" stroke-width=".7"/></svg>
<div class="ti" style="left:41.5px;top:271.9px">BC不亮</div>
<svg class="tico" style="left:13.3px;top:284.5px" width="5" height="5" viewBox="0 0 5 5"><rect x="0.4" y="0.4" width="4.2" height="4.2" fill="#e9ecee" stroke="#a3a9ad" stroke-width=".8"/><path d="M1.3 2.5H3.7" stroke="#5f6468" stroke-width=".8"/></svg>
<svg class="tico" style="left:21.9px;top:283.7px" width="9" height="6.8" viewBox="0 0 9 6.8"><path d="M0.3 1.1C0.3 0.7 0.6 0.4 1 0.4H3.2L4 1.3H8C8.4 1.3 8.7 1.6 8.7 2V5.8C8.7 6.2 8.4 6.5 8 6.5H1C0.6 6.5 0.3 6.2 0.3 5.8Z" fill="#f9e89c" stroke="#e4c660" stroke-width=".6"/><path d="M0.6 2.3H8.4" stroke="#fdf3c2" stroke-width=".8"/></svg>
<div class="ti" style="left:32.0px;top:281.9px">飞龙大道_路西</div>
<svg class="tico" style="left:32.2px;top:292.5px" width="7.2" height="8.2" viewBox="0 0 7.2 8.2"><path d="M0.5 0.5H4.7L6.7 2.5V7.7H0.5Z" fill="#dbe6f7" stroke="#7f99d0" stroke-width=".9"/><path d="M1.2 1.2H4.2V3.1H6V4.6H1.2Z" fill="#f7faff"/><path d="M4.5 0.6V2.7H6.6" fill="none" stroke="#7f99d0" stroke-width=".7"/></svg>
<div class="ti" style="left:41.5px;top:291.8px">BC不亮</div>
<svg class="tico" style="left:32.2px;top:302.4px" width="7.2" height="8.2" viewBox="0 0 7.2 8.2"><path d="M0.5 0.5H4.7L6.7 2.5V7.7H0.5Z" fill="#dbe6f7" stroke="#7f99d0" stroke-width=".9"/><path d="M1.2 1.2H4.2V3.1H6V4.6H1.2Z" fill="#f7faff"/><path d="M4.5 0.6V2.7H6.6" fill="none" stroke="#7f99d0" stroke-width=".7"/></svg>
<div class="ti" style="left:41.5px;top:301.7px">A</div>
<svg class="tico" style="left:13.3px;top:314.3px" width="5" height="5" viewBox="0 0 5 5"><rect x="0.4" y="0.4" width="4.2" height="4.2" fill="#e9ecee" stroke="#a3a9ad" stroke-width=".8"/><path d="M1.3 2.5H3.7" stroke="#5f6468" stroke-width=".8"/></svg>
<svg class="tico" style="left:21.9px;top:313.5px" width="9" height="6.8" viewBox="0 0 9 6.8"><path d="M0.3 1.1C0.3 0.7 0.6 0.4 1 0.4H3.2L4 1.3H8C8.4 1.3 8.7 1.6 8.7 2V5.8C8.7 6.2 8.4 6.5 8 6.5H1C0.6 6.5 0.3 6.2 0.3 5.8Z" fill="#f9e89c" stroke="#e4c660" stroke-width=".6"/><path d="M0.6 2.3H8.4" stroke="#fdf3c2" stroke-width=".8"/></svg>
<div class="ti" style="left:32.0px;top:311.7px">上善大道北段</div>
<svg class="tico" style="left:32.2px;top:322.3px" width="7.2" height="8.2" viewBox="0 0 7.2 8.2"><path d="M0.5 0.5H4.7L6.7 2.5V7.7H0.5Z" fill="#dbe6f7" stroke="#7f99d0" stroke-width=".9"/><path d="M1.2 1.2H4.2V3.1H6V4.6H1.2Z" fill="#f7faff"/><path d="M4.5 0.6V2.7H6.6" fill="none" stroke="#7f99d0" stroke-width=".7"/></svg>
<div class="ti" style="left:41.5px;top:321.6px">方案2</div>
<div id="tsb" class="abs"><svg class="abs" style="left:3.4px;top:5.2px" width="6.4" height="3.4" viewBox="0 0 6.4 3.4"><path d="M0 3.4H6.4L3.2 0Z" fill="#505050"/></svg><div class="th"></div><svg class="abs" style="left:3.4px;top:320.2px" width="6.4" height="3.4" viewBox="0 0 6.4 3.4"><path d="M0 0H6.4L3.2 3.4Z" fill="#505050"/></svg></div>
</div>
<svg class="abs" style="left:303.8px;top:386.2px" width="19" height="14.4" viewBox="0 0 19 14.4" fill="#9d69bb"><circle cx="1.8" cy="1.9" r="1.8"/><rect x="5.2" y="0.5" width="13.8" height="2.8"/><circle cx="1.8" cy="7.2" r="1.8"/><rect x="5.2" y="5.8" width="13.8" height="2.8"/><circle cx="1.8" cy="12.5" r="1.8"/><rect x="5.2" y="11.1" width="13.8" height="2.8"/></svg>
<svg class="abs" style="left:348.8px;top:385.2px" width="15.8" height="15.8" viewBox="0 0 16 16"><circle cx="8" cy="8" r="8" fill="#d25a44"/><path d="M5 5L11 11M11 5L5 11" stroke="#fff" stroke-width="2.6"/></svg>
<div id="h1" class="abs">贵州省<i>/</i>贵阳市<i>/</i>花溪区<i>/</i>贵阳无线集中器2<small>»</small></div>
<div id="dot" class="abs"></div>
<svg class="abs" style="left:407.4px;top:90.6px" width="12" height="11.6" viewBox="0 0 12 11.6"><path d="M1.3 5.2C1.6 2.8 3.6 1.2 6 1.2C7.5 1.2 8.7 1.8 9.5 2.8" fill="none" stroke="#f08c3e" stroke-width="2"/><path d="M11.6 0.6V4.6H7.6Z" fill="#f08c3e"/><path d="M10.7 6.4C10.4 8.8 8.4 10.4 6 10.4C4.5 10.4 3.3 9.8 2.5 8.8" fill="none" stroke="#f08c3e" stroke-width="2"/><path d="M0.4 11V7H4.4Z" fill="#f08c3e"/></svg>
<div id="kw" class="abs">这里输入关键词</div>
<div id="stl" class="abs">状态 :</div>
<div id="sel" class="abs">全部<svg class="abs" style="left:30.4px;top:5.8px" width="5.2" height="3" viewBox="0 0 6 3.4"><path d="M0 0H6L3 3.4Z" fill="#606060"/></svg></div>
<div id="sbtn" class="abs"><svg class="abs" style="left:4.6px;top:5px" width="6.8" height="6.8" viewBox="0 0 8 8"><circle cx="3.2" cy="3.2" r="2.3" fill="none" stroke="#fff" stroke-width="1.3"/><path d="M5 5L7.4 7.4" stroke="#fff" stroke-width="1.4" stroke-linecap="round"/></svg></div>
<div class="sl abs" style="left:0;top:0">
<div class="tr" style="left:821px;top:95.4px;width:83.8px;height:2.2px;background:#e9e9e9"></div>
<div class="hn" style="left:818.8px;top:92.8px"></div>
<div class="lb" style="left:827.8px;top:84.6px;color:#b2b2b2">0%</div>
<div class="lb" style="left:823px;top:100.6px;color:#b2b2b2;font-size:8.4px">0</div>
<div class="lb" style="left:844.3px;top:100.6px;color:#b2b2b2;font-size:8.4px">25</div>
<div class="lb" style="left:865.1px;top:100.6px;color:#b2b2b2;font-size:8.4px">50</div>
<div class="lb" style="left:885.9px;top:100.6px;color:#b2b2b2;font-size:8.4px">75</div>
<div class="lb" style="left:907px;top:100.6px;color:#b2b2b2;font-size:8.4px">100</div>
</div>
<div class="abs" style="left:0;top:0">
<div class="abs" style="left:399.4px;top:113.5px;width:830.9px;height:22.0px;background:linear-gradient(#f9f9f9,#ebebeb);border-top:1px solid #e3e3e3"></div>
<div class="abs" style="left:399.4px;top:135.5px;width:742.1999999999999px;height:64.5px;background:linear-gradient(#f4f4f4,#eaeaea)"></div>
<div class="abs" style="left:399.4px;top:200.00px;width:830.9px;height:54.87px;background:#f9f9f9"></div>
<div class="hl" style="left:399.4px;top:199.50px;width:831.9px"></div>
<div class="abs" style="left:399.4px;top:254.87px;width:830.9px;height:54.87px;background:#f4f4f4"></div>
<div class="hl" style="left:399.4px;top:254.37px;width:831.9px"></div>
<div class="abs" style="left:399.4px;top:309.74px;width:830.9px;height:54.87px;background:#f9f9f9"></div>
<div class="hl" style="left:399.4px;top:309.24px;width:831.9px"></div>
<div class="abs" style="left:399.4px;top:364.61px;width:830.9px;height:54.87px;background:#fff"></div>
<div class="hl" style="left:399.4px;top:364.11px;width:831.9px"></div>
<div class="abs" style="left:399.4px;top:419.48px;width:830.9px;height:54.87px;background:#f9f9f9"></div>
<div class="hl" style="left:399.4px;top:418.98px;width:831.9px"></div>
<div class="abs" style="left:399.4px;top:474.35px;width:830.9px;height:54.87px;background:#fff"></div>
<div class="hl" style="left:399.4px;top:473.85px;width:831.9px"></div>
<div class="abs" style="left:399.4px;top:529.22px;width:830.9px;height:46.78px;background:#f9f9f9"></div>
<div class="hl" style="left:399.4px;top:528.72px;width:831.9px"></div>
<div class="vl" style="left:398.9px;top:113.5px;height:462.5px"></div>
<div class="vl" style="left:424.8px;top:113.5px;height:462.5px"></div>
<div class="vl" style="left:487.0px;top:113.5px;height:462.5px"></div>
<div class="vl" style="left:574.9px;top:113.5px;height:462.5px"></div>
<div class="vl" style="left:663.5px;top:113.5px;height:462.5px"></div>
<div class="vl" style="left:734.0px;top:113.5px;height:462.5px"></div>
<div class="vl" style="left:804.9px;top:113.5px;height:462.5px"></div>
<div class="vl" style="left:875.9px;top:113.5px;height:462.5px"></div>
<div class="vl" style="left:963.8px;top:113.5px;height:462.5px"></div>
<div class="vl" style="left:1052.1px;top:113.5px;height:462.5px"></div>
<div class="vl" style="left:1141.1px;top:113.5px;height:462.5px"></div>
<div class="vl" style="left:1229.8px;top:113.5px;height:22.0px"></div>
<div class="vl" style="left:1229.8px;top:200.0px;height:376.0px"></div>
<div class="c hd" style="left:425.3px;width:62.19999999999999px;top:120.50px">序号</div>
<div class="c hd" style="left:487.5px;width:87.89999999999998px;top:120.50px">名称</div>
<div class="c hd" style="left:575.4px;width:88.60000000000002px;top:120.50px">灯地址</div>
<div class="c hd" style="left:664px;width:70.5px;top:120.50px"><span style="font-size:8.9px">PWM</span></div>
<div class="c hd" style="left:734.5px;width:70.89999999999998px;top:120.50px">功率<span style="font-size:8.9px">(W)</span></div>
<div class="c hd" style="left:805.4px;width:71.0px;top:120.50px">电压<span style="font-size:8.9px">(V)</span></div>
<div class="c hd" style="left:876.4px;width:87.89999999999998px;top:120.50px">电流<span style="font-size:8.9px">(mA)</span></div>
<div class="c hd" style="left:964.3px;width:88.29999999999995px;top:120.50px">采集时间</div>
<div class="c hd" style="left:1052.6px;width:89.0px;top:120.50px">调光</div>
<div class="c lk" style="left:1141.6px;width:88.70000000000005px;top:120.50px"><svg style="display:inline-block;vertical-align:-1px;margin-right:.5px" width="4.6" height="7.4" viewBox="0 0 5.4 8.6"><path d="M2.7 0.5C4 0.5 4.9 1.4 4.9 2.6C4.9 3.8 3.9 4.3 3.8 5.6H1.6C1.5 4.3 0.5 3.8 0.5 2.6C0.5 1.4 1.4 0.5 2.7 0.5Z" fill="none" stroke="#6aa5d8" stroke-width=".9"/><rect x="1.5" y="6.1" width="2.4" height="0.9" fill="#6aa5d8"/><rect x="1.9" y="7.4" width="1.6" height="0.9" fill="#6aa5d8"/></svg>全部采集</div>
<div class="cb" style="left:408.2px;top:122.5px"></div>
<div class="c " style="left:425.3px;width:62.19999999999999px;top:163.30px">-</div>
<div class="c " style="left:487.5px;width:87.89999999999998px;top:163.30px">-</div>
<div class="c " style="left:575.4px;width:88.60000000000002px;top:163.30px">-</div>
<div class="c " style="left:876.4px;width:87.89999999999998px;top:163.30px">-</div>
<div class="c " style="left:964.3px;width:88.29999999999995px;top:163.30px"><span style="font-size:9.6px;color:#333">/</span></div>
<div class="c " style="left:664px;width:70.5px;top:140.40px"><b style="color:#1a1a1a;font-size:7.7px">正常 : <span class="dg">0</span><span class="ar">→</span></b></div>
<div class="c " style="left:664px;width:70.5px;top:163.00px"><b style="color:#3035c8;font-size:7.7px">偏高 : <span class="dg">207</span><span class="au">↑</span></b></div>
<div class="c " style="left:664px;width:70.5px;top:185.50px"><b style="color:#dc2c30;font-size:7.7px">偏低 : <span class="dg">19</span><span class="au">↓</span></b></div>
<div class="c " style="left:734.5px;width:70.89999999999998px;top:140.40px"><b style="color:#1a1a1a;font-size:7.7px">正常 : <span class="dg">0</span><span class="ar">→</span></b></div>
<div class="c " style="left:734.5px;width:70.89999999999998px;top:163.00px"><b style="color:#3035c8;font-size:7.7px">偏高 : <span class="dg">211</span><span class="au">↑</span></b></div>
<div class="c " style="left:734.5px;width:70.89999999999998px;top:185.50px"><b style="color:#dc2c30;font-size:7.7px">偏低 : <span class="dg">15</span><span class="au">↓</span></b></div>
<div class="c " style="left:805.4px;width:71.0px;top:140.40px"><b style="color:#1a1a1a;font-size:7.7px">正常 : <span class="dg">0</span><span class="ar">→</span></b></div>
<div class="c " style="left:805.4px;width:71.0px;top:163.00px"><b style="color:#3035c8;font-size:7.7px">偏高 : <span class="dg">210</span><span class="au">↑</span></b></div>
<div class="c " style="left:805.4px;width:71.0px;top:185.50px"><b style="color:#dc2c30;font-size:7.7px">偏低 : <span class="dg">16</span><span class="au">↓</span></b></div>
<div class="cb" style="left:408.2px;top:224.90px"></div>
<div class="c " style="left:425.3px;width:62.19999999999999px;top:222.30px">0</div>
<div class="c " style="left:487.5px;width:87.89999999999998px;top:222.30px"><span style="font-size:7.7px">春风路北<span style="font-size:8.4px">01_ </span>辅灯</span></div>
<div class="c " style="left:575.4px;width:88.60000000000002px;top:222.30px">021A</div>
<div class="c " style="left:664px;width:70.5px;top:222.30px">255</div>
<div class="c bl" style="left:734.5px;width:70.89999999999998px;top:222.30px">72<span class="ad">↑</span></div>
<div class="c bl" style="left:805.4px;width:71.0px;top:222.30px">222<span class="ad">↑</span></div>
<div class="c bl" style="left:876.4px;width:87.89999999999998px;top:222.30px">329<span class="ad">↑</span></div>
<div class="c " style="left:964.3px;width:88.29999999999995px;top:222.30px">2020-02-11 18:10:0</div>
<div class="sl">
<div class="tr" style="left:1069.9px;top:226.30px;width:54px"></div>
<div class="hn" style="left:1121.7px;top:223.70px"></div>
<div class="lb" style="left:1114.5px;top:215.60px">100%</div>
<div class="lb" style="left:1070.3px;top:232.10px">0</div>
<div class="lb" style="left:1083.9px;top:232.10px">25</div>
<div class="lb" style="left:1098px;top:232.10px">50</div>
<div class="lb" style="left:1111.9px;top:232.10px">75</div>
<div class="lb" style="left:1125.8px;top:232.10px">100</div>
</div>
<div class="c lk" style="left:1141.6px;width:88.70000000000005px;top:222.30px"><svg style="display:inline-block;vertical-align:-1px;margin-right:.5px" width="4.6" height="7.4" viewBox="0 0 5.4 8.6"><path d="M2.7 0.5C4 0.5 4.9 1.4 4.9 2.6C4.9 3.8 3.9 4.3 3.8 5.6H1.6C1.5 4.3 0.5 3.8 0.5 2.6C0.5 1.4 1.4 0.5 2.7 0.5Z" fill="none" stroke="#6aa5d8" stroke-width=".9"/><rect x="1.5" y="6.1" width="2.4" height="0.9" fill="#6aa5d8"/><rect x="1.9" y="7.4" width="1.6" height="0.9" fill="#6aa5d8"/></svg>采集</div>
<div class="cb" style="left:408.2px;top:279.77px"></div>
<div class="c " style="left:425.3px;width:62.19999999999999px;top:277.17px">1</div>
<div class="c " style="left:487.5px;width:87.89999999999998px;top:277.17px"><span style="font-size:7.7px">春风路北<span style="font-size:8.4px">01_</span>主灯</span></div>
<div class="c " style="left:575.4px;width:88.60000000000002px;top:277.17px">021B</div>
<div class="c " style="left:664px;width:70.5px;top:277.17px">255</div>
<div class="c bl" style="left:734.5px;width:70.89999999999998px;top:277.17px">117<span class="ad">↑</span></div>
<div class="c bl" style="left:805.4px;width:71.0px;top:277.17px">222<span class="ad">↑</span></div>
<div class="c bl" style="left:876.4px;width:87.89999999999998px;top:277.17px">547<span class="ad">↑</span></div>
<div class="c " style="left:964.3px;width:88.29999999999995px;top:277.17px">2020-02-11 18:10:0</div>
<div class="sl">
<div class="tr" style="left:1069.9px;top:281.17px;width:54px"></div>
<div class="hn" style="left:1121.7px;top:278.57px"></div>
<div class="lb" style="left:1114.5px;top:270.47px">100%</div>
<div class="lb" style="left:1070.3px;top:286.97px">0</div>
<div class="lb" style="left:1083.9px;top:286.97px">25</div>
<div class="lb" style="left:1098px;top:286.97px">50</div>
<div class="lb" style="left:1111.9px;top:286.97px">75</div>
<div class="lb" style="left:1125.8px;top:286.97px">100</div>
</div>
<div class="c lk" style="left:1141.6px;width:88.70000000000005px;top:277.17px"><svg style="display:inline-block;vertical-align:-1px;margin-right:.5px" width="4.6" height="7.4" viewBox="0 0 5.4 8.6"><path d="M2.7 0.5C4 0.5 4.9 1.4 4.9 2.6C4.9 3.8 3.9 4.3 3.8 5.6H1.6C1.5 4.3 0.5 3.8 0.5 2.6C0.5 1.4 1.4 0.5 2.7 0.5Z" fill="none" stroke="#6aa5d8" stroke-width=".9"/><rect x="1.5" y="6.1" width="2.4" height="0.9" fill="#6aa5d8"/><rect x="1.9" y="7.4" width="1.6" height="0.9" fill="#6aa5d8"/></svg>采集</div>
<div class="cb" style="left:408.2px;top:334.64px"></div>
<div class="c " style="left:425.3px;width:62.19999999999999px;top:332.04px">2</div>
<div class="c " style="left:487.5px;width:87.89999999999998px;top:332.04px"><span style="font-size:7.7px">春风路北<span style="font-size:8.4px">02_</span>主灯</span></div>
<div class="c " style="left:575.4px;width:88.60000000000002px;top:332.04px">0245</div>
<div class="c " style="left:664px;width:70.5px;top:332.04px">255</div>
<div class="c bl" style="left:734.5px;width:70.89999999999998px;top:332.04px">118<span class="ad">↑</span></div>
<div class="c bl" style="left:805.4px;width:71.0px;top:332.04px">222<span class="ad">↑</span></div>
<div class="c bl" style="left:876.4px;width:87.89999999999998px;top:332.04px">547<span class="ad">↑</span></div>
<div class="c " style="left:964.3px;width:88.29999999999995px;top:332.04px">2020-02-11 18:10:0</div>
<div class="sl">
<div class="tr" style="left:1069.9px;top:336.04px;width:54px"></div>
<div class="hn" style="left:1121.7px;top:333.44px"></div>
<div class="lb" style="left:1114.5px;top:325.34px">100%</div>
<div class="lb" style="left:1070.3px;top:341.84px">0</div>
<div class="lb" style="left:1083.9px;top:341.84px">25</div>
<div class="lb" style="left:1098px;top:341.84px">50</div>
<div class="lb" style="left:1111.9px;top:341.84px">75</div>
<div class="lb" style="left:1125.8px;top:341.84px">100</div>
</div>
<div class="c lk" style="left:1141.6px;width:88.70000000000005px;top:332.04px"><svg style="display:inline-block;vertical-align:-1px;margin-right:.5px" width="4.6" height="7.4" viewBox="0 0 5.4 8.6"><path d="M2.7 0.5C4 0.5 4.9 1.4 4.9 2.6C4.9 3.8 3.9 4.3 3.8 5.6H1.6C1.5 4.3 0.5 3.8 0.5 2.6C0.5 1.4 1.4 0.5 2.7 0.5Z" fill="none" stroke="#6aa5d8" stroke-width=".9"/><rect x="1.5" y="6.1" width="2.4" height="0.9" fill="#6aa5d8"/><rect x="1.9" y="7.4" width="1.6" height="0.9" fill="#6aa5d8"/></svg>采集</div>
<div class="cb" style="left:408.2px;top:389.51px"></div>
<div class="c " style="left:425.3px;width:62.19999999999999px;top:386.91px">3</div>
<div class="c " style="left:487.5px;width:87.89999999999998px;top:386.91px"><span style="font-size:7.7px">春风路北<span style="font-size:8.4px">02_</span>辅灯</span></div>
<div class="c " style="left:575.4px;width:88.60000000000002px;top:386.91px">0244</div>
<div class="c " style="left:664px;width:70.5px;top:386.91px">255</div>
<div class="c bl" style="left:734.5px;width:70.89999999999998px;top:386.91px">74<span class="ad">↑</span></div>
<div class="c bl" style="left:805.4px;width:71.0px;top:386.91px">222<span class="ad">↑</span></div>
<div class="c bl" style="left:876.4px;width:87.89999999999998px;top:386.91px">340<span class="ad">↑</span></div>
<div class="c " style="left:964.3px;width:88.29999999999995px;top:386.91px">2020-02-11 18:36:0</div>
<div class="sl">
<div class="tr" style="left:1069.9px;top:390.91px;width:54px"></div>
<div class="hn" style="left:1121.7px;top:388.31px"></div>
<div class="lb" style="left:1114.5px;top:380.21px">100%</div>
<div class="lb" style="left:1070.3px;top:396.71px">0</div>
<div class="lb" style="left:1083.9px;top:396.71px">25</div>
<div class="lb" style="left:1098px;top:396.71px">50</div>
<div class="lb" style="left:1111.9px;top:396.71px">75</div>
<div class="lb" style="left:1125.8px;top:396.71px">100</div>
</div>
<div class="c lk" style="left:1141.6px;width:88.70000000000005px;top:386.91px"><svg style="display:inline-block;vertical-align:-1px;margin-right:.5px" width="4.6" height="7.4" viewBox="0 0 5.4 8.6"><path d="M2.7 0.5C4 0.5 4.9 1.4 4.9 2.6C4.9 3.8 3.9 4.3 3.8 5.6H1.6C1.5 4.3 0.5 3.8 0.5 2.6C0.5 1.4 1.4 0.5 2.7 0.5Z" fill="none" stroke="#6aa5d8" stroke-width=".9"/><rect x="1.5" y="6.1" width="2.4" height="0.9" fill="#6aa5d8"/><rect x="1.9" y="7.4" width="1.6" height="0.9" fill="#6aa5d8"/></svg>采集</div>
<div class="cb" style="left:408.2px;top:444.38px"></div>
<div class="c " style="left:425.3px;width:62.19999999999999px;top:441.78px">4</div>
<div class="c " style="left:487.5px;width:87.89999999999998px;top:441.78px"><span style="font-size:7.7px">春风路北<span style="font-size:8.4px">03_</span>主灯</span></div>
<div class="c " style="left:575.4px;width:88.60000000000002px;top:441.78px">02A1</div>
<div class="c " style="left:664px;width:70.5px;top:441.78px">255</div>
<div class="c bl" style="left:734.5px;width:70.89999999999998px;top:441.78px">116<span class="ad">↑</span></div>
<div class="c bl" style="left:805.4px;width:71.0px;top:441.78px">219<span class="ad">↑</span></div>
<div class="c bl" style="left:876.4px;width:87.89999999999998px;top:441.78px">547<span class="ad">↑</span></div>
<div class="c " style="left:964.3px;width:88.29999999999995px;top:441.78px">2020-02-11 18:10:0</div>
<div class="sl">
<div class="tr" style="left:1069.9px;top:445.78px;width:54px"></div>
<div class="hn" style="left:1121.7px;top:443.18px"></div>
<div class="lb" style="left:1114.5px;top:435.08px">100%</div>
<div class="lb" style="left:1070.3px;top:451.58px">0</div>
<div class="lb" style="left:1083.9px;top:451.58px">25</div>
<div class="lb" style="left:1098px;top:451.58px">50</div>
<div class="lb" style="left:1111.9px;top:451.58px">75</div>
<div class="lb" style="left:1125.8px;top:451.58px">100</div>
</div>
<div class="c lk" style="left:1141.6px;width:88.70000000000005px;top:441.78px"><svg style="display:inline-block;vertical-align:-1px;margin-right:.5px" width="4.6" height="7.4" viewBox="0 0 5.4 8.6"><path d="M2.7 0.5C4 0.5 4.9 1.4 4.9 2.6C4.9 3.8 3.9 4.3 3.8 5.6H1.6C1.5 4.3 0.5 3.8 0.5 2.6C0.5 1.4 1.4 0.5 2.7 0.5Z" fill="none" stroke="#6aa5d8" stroke-width=".9"/><rect x="1.5" y="6.1" width="2.4" height="0.9" fill="#6aa5d8"/><rect x="1.9" y="7.4" width="1.6" height="0.9" fill="#6aa5d8"/></svg>采集</div>
<div class="cb" style="left:408.2px;top:499.25px"></div>
<div class="c " style="left:425.3px;width:62.19999999999999px;top:496.65px">5</div>
<div class="c " style="left:487.5px;width:87.89999999999998px;top:496.65px"><span style="font-size:7.7px">春风路北<span style="font-size:8.4px">03_</span>辅灯</span></div>
<div class="c " style="left:575.4px;width:88.60000000000002px;top:496.65px">02A0</div>
<div class="c " style="left:664px;width:70.5px;top:496.65px">255</div>
<div class="c bl" style="left:734.5px;width:70.89999999999998px;top:496.65px">73<span class="ad">↑</span></div>
<div class="c bl" style="left:805.4px;width:71.0px;top:496.65px">219<span class="ad">↑</span></div>
<div class="c bl" style="left:876.4px;width:87.89999999999998px;top:496.65px">341<span class="ad">↑</span></div>
<div class="c " style="left:964.3px;width:88.29999999999995px;top:496.65px">2020-02-11 18:36:0</div>
<div class="sl">
<div class="tr" style="left:1069.9px;top:500.65px;width:54px"></div>
<div class="hn" style="left:1121.7px;top:498.05px"></div>
<div class="lb" style="left:1114.5px;top:489.95px">100%</div>
<div class="lb" style="left:1070.3px;top:506.45px">0</div>
<div class="lb" style="left:1083.9px;top:506.45px">25</div>
<div class="lb" style="left:1098px;top:506.45px">50</div>
<div class="lb" style="left:1111.9px;top:506.45px">75</div>
<div class="lb" style="left:1125.8px;top:506.45px">100</div>
</div>
<div class="c lk" style="left:1141.6px;width:88.70000000000005px;top:496.65px"><svg style="display:inline-block;vertical-align:-1px;margin-right:.5px" width="4.6" height="7.4" viewBox="0 0 5.4 8.6"><path d="M2.7 0.5C4 0.5 4.9 1.4 4.9 2.6C4.9 3.8 3.9 4.3 3.8 5.6H1.6C1.5 4.3 0.5 3.8 0.5 2.6C0.5 1.4 1.4 0.5 2.7 0.5Z" fill="none" stroke="#6aa5d8" stroke-width=".9"/><rect x="1.5" y="6.1" width="2.4" height="0.9" fill="#6aa5d8"/><rect x="1.9" y="7.4" width="1.6" height="0.9" fill="#6aa5d8"/></svg>采集</div>
<div class="cb" style="left:408.2px;top:554.12px"></div>
<div class="c " style="left:425.3px;width:62.19999999999999px;top:551.52px">6</div>
<div class="c " style="left:487.5px;width:87.89999999999998px;top:551.52px"><span style="font-size:7.7px">春风路北<span style="font-size:8.4px">04_</span>主灯</span></div>
<div class="c " style="left:575.4px;width:88.60000000000002px;top:551.52px">0231</div>
<div class="c " style="left:664px;width:70.5px;top:551.52px">255</div>
<div class="c bl" style="left:734.5px;width:70.89999999999998px;top:551.52px">115<span class="ad">↑</span></div>
<div class="c bl" style="left:805.4px;width:71.0px;top:551.52px">218<span class="ad">↑</span></div>
<div class="c bl" style="left:876.4px;width:87.89999999999998px;top:551.52px">544<span class="ad">↑</span></div>
<div class="c " style="left:964.3px;width:88.29999999999995px;top:551.52px">2020-02-11 18:11:0</div>
<div class="sl">
<div class="tr" style="left:1069.9px;top:555.52px;width:54px"></div>
<div class="hn" style="left:1121.7px;top:552.92px"></div>
<div class="lb" style="left:1114.5px;top:544.82px">100%</div>
<div class="lb" style="left:1070.3px;top:561.32px">0</div>
<div class="lb" style="left:1083.9px;top:561.32px">25</div>
<div class="lb" style="left:1098px;top:561.32px">50</div>
<div class="lb" style="left:1111.9px;top:561.32px">75</div>
<div class="lb" style="left:1125.8px;top:561.32px">100</div>
</div>
<div class="c lk" style="left:1141.6px;width:88.70000000000005px;top:551.52px"><svg style="display:inline-block;vertical-align:-1px;margin-right:.5px" width="4.6" height="7.4" viewBox="0 0 5.4 8.6"><path d="M2.7 0.5C4 0.5 4.9 1.4 4.9 2.6C4.9 3.8 3.9 4.3 3.8 5.6H1.6C1.5 4.3 0.5 3.8 0.5 2.6C0.5 1.4 1.4 0.5 2.7 0.5Z" fill="none" stroke="#6aa5d8" stroke-width=".9"/><rect x="1.5" y="6.1" width="2.4" height="0.9" fill="#6aa5d8"/><rect x="1.9" y="7.4" width="1.6" height="0.9" fill="#6aa5d8"/></svg>采集</div>
</div>
<div class="abs" style="left:104px;top:576px;width:1164px;height:20px;background:#fff"></div>
<div id="msb" class="abs"><svg class="abs" style="left:3.8px;top:6.2px" width="6.4" height="3.4" viewBox="0 0 6.4 3.4"><path d="M0 3.4H6.4L3.2 0Z" fill="#a0a0a0"/></svg><div class="th"></div><svg class="abs" style="left:3.8px;top:520.6px" width="6.4" height="3.4" viewBox="0 0 6.4 3.4"><path d="M0 0H6.4L3.2 3.4Z" fill="#505050"/></svg></div>
<div class="abs" style="left:0;top:596px;width:1268px;height:1px;background:#3a3d40"></div>
</body></html>
